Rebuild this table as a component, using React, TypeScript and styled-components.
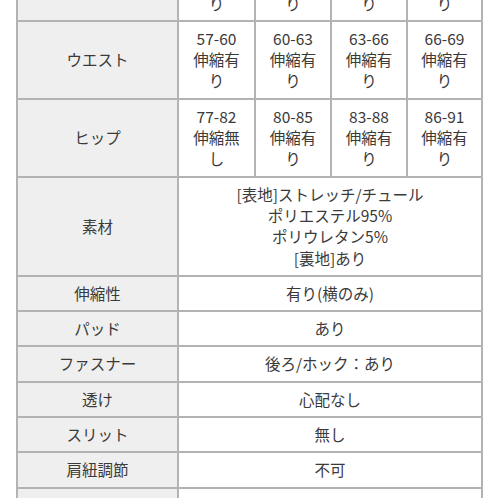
import { FC, Fragment } from 'react'
import styled, { createGlobalStyle } from 'styled-components'

const GlobalStyle = createGlobalStyle`
  html, body {
    margin: 0;
    padding: 0;
    background: #ffffff;
    overflow: hidden;
  }
  body {
    font-family: 'Noto Sans CJK JP', 'Noto Sans', sans-serif;
    color: #3a3a3a;
  }
`

const Page = styled.div`
  width: 498px;
  height: 498px;
  overflow: hidden;
  padding-left: 16px;
  box-sizing: border-box;
`

const SizeTable = styled.div`
  margin-top: -58px;
  display: grid;
  grid-template-columns: 159px 75px 74px 74px 73px;
  gap: 2px;
  padding: 2px;
  width: max-content;
  background: #b3b3b3;
`

const HeadCell = styled.div`
  background: #efefef;
  display: flex;
  align-items: center;
  justify-content: center;
  text-align: center;
  font-size: 15.5px;
  line-height: 21.3px;
  padding: 6px 8px;
`

const ValueCell = styled.div<{ $wide?: boolean }>`
  grid-column: ${({ $wide }) => ($wide ? 'span 4' : 'auto')};
  background: #ffffff;
  display: flex;
  align-items: center;
  justify-content: center;
  text-align: center;
  font-size: 15.5px;
  line-height: 21.3px;
  padding: 6px 8px;
  word-break: break-all;
`

interface SizeRow {
  label: string
  values: string[]
}

const sizeRows: SizeRow[] = [
  { label: 'バスト', values: ['79-84伸縮有り', '82-87伸縮有り', '85-90伸縮有り', '88-93伸縮有り'] },
  { label: 'ウエスト', values: ['57-60伸縮有り', '60-63伸縮有り', '63-66伸縮有り', '66-69伸縮有り'] },
  { label: 'ヒップ', values: ['77-82伸縮無し', '80-85伸縮有り', '83-88伸縮有り', '86-91伸縮有り'] },
]

interface InfoRow {
  label: string
  lines: string[]
}

const infoRows: InfoRow[] = [
  {
    label: '素材',
    lines: ['[表地]ストレッチ/チュール', 'ポリエステル95%', 'ポリウレタン5%', '[裏地]あり'],
  },
  { label: '伸縮性', lines: ['有り(横のみ)'] },
  { label: 'パッド', lines: ['あり'] },
  { label: 'ファスナー', lines: ['後ろ/ホック：あり'] },
  { label: '透け', lines: ['心配なし'] },
  { label: 'スリット', lines: ['無し'] },
  { label: '肩紐調節', lines: ['不可'] },
  { label: 'ストラップ', lines: ['取り外し不可(調節不可)'] },
]

// "57-60伸縮有り" -> ["57-60", "伸縮有り"]
const splitValue = (value: string) => {
  const match = value.match(/^([\d-]+)(.*)$/)
  return match ? [match[1], match[2]] : [value]
}

const App: FC = () => {
  return (
    <Page>
      <GlobalStyle />
      <SizeTable>
        {sizeRows.map((row) => (
          <Fragment key={row.label}>
            <HeadCell>{row.label}</HeadCell>
            {row.values.map((value, i) => (
              <ValueCell key={i}>
                <div>
                  {splitValue(value).map((part, j) => (
                    <div key={j}>{part}</div>
                  ))}
                </div>
              </ValueCell>
            ))}
          </Fragment>
        ))}
        {infoRows.map((row) => (
          <Fragment key={row.label}>
            <HeadCell>{row.label}</HeadCell>
            <ValueCell $wide>
              <div>
                {row.lines.map((line, j) => (
                  <div key={j}>{line}</div>
                ))}
              </div>
            </ValueCell>
          </Fragment>
        ))}
      </SizeTable>
    </Page>
  )
}

export default App
